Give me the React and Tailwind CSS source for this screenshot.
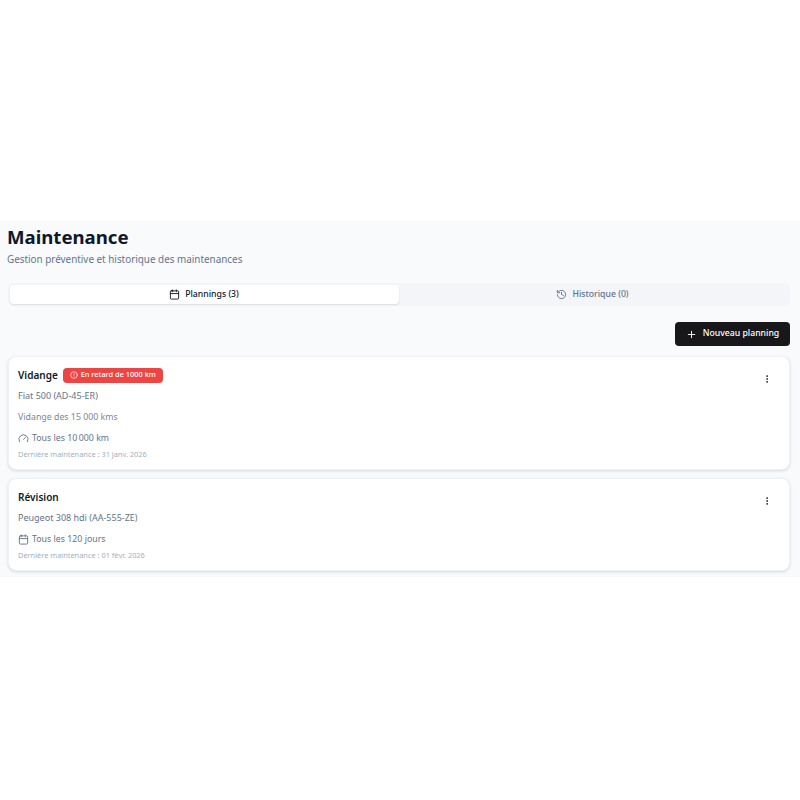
import { Calendar, CircleAlert, EllipsisVertical, Gauge, History, Plus } from "lucide-react"

function Card({ title, badge, vehicle, note, icon: Icon, every, last }) {
  return (
    <div className="flex items-start justify-between rounded-lg border border-[#eef1f5] bg-white pl-[9px] pr-[17px] pt-[10px] pb-[7px] shadow-[0_1px_3px_rgba(15,23,42,0.14)]">
      <div className="flex flex-col">
        <div className="flex h-[16px] items-center gap-[5px]">
          <h3 className="text-[10px] font-semibold text-[#0f172a]">{title}</h3>
          {badge && (
            <span className="flex h-[15px] w-[100px] items-center justify-center gap-[3px] rounded-[4px] bg-[#ef4444] text-[7.4px] font-medium text-white">
              <CircleAlert className="h-[8px] w-[8px]" />
              {badge}
            </span>
          )}
        </div>
        <p className="mt-[5px] text-[9px] leading-[16px] text-[#64748b]">{vehicle}</p>
        {note && <p className="mt-[5px] text-[8.8px] leading-[16px] text-[#7b8798]">{note}</p>}
        <div className="mt-[5px] flex h-[16px] items-center gap-[3px] text-[8.8px] leading-[16px] text-[#64748b]">
          <Icon className="h-[11px] w-[11px]" />
          {every}
        </div>
        <p className="text-[7.4px] leading-[16px] text-[#a3afbf]">{last}</p>
      </div>
      <EllipsisVertical className="mt-[7px] h-[10px] w-[10px] text-[#0f172a]" />
    </div>
  )
}

export default function App() {
  return (
    <div className="pt-[221px] font-['Noto_Sans',sans-serif]">
      <div className="flex h-[356px] flex-col bg-[#f8fafc] pl-[8px] pr-[10px] pt-[4px]">
        <h1 className="-ml-[1px] text-[18.6px] leading-[24px] font-bold text-[#0f172a]">Maintenance</h1>
        <p className="-ml-[1px] mt-[2px] text-[9.9px] leading-[16px] text-[#64748b]">Gestion préventive et historique des maintenances</p>

        <div className="mt-[16px] flex h-[23px] items-center rounded-md bg-[#f3f5f8] p-[2px]">
          <button className="flex h-[19px] w-[389px] items-center justify-center gap-[5px] rounded-[4px] bg-white pr-[1px] text-[8.7px] font-medium text-[#0f172a] shadow-[0_1px_2px_rgba(15,23,42,0.1)]">
            <Calendar className="h-[11px] w-[11px]" />
            Plannings (3)
          </button>
          <button className="flex h-[19px] flex-1 items-center justify-center gap-[5px] pr-[2px] text-[8.7px] font-medium text-[#64748b]">
            <History className="h-[11px] w-[11px]" />
            Historique (0)
          </button>
        </div>

        <div className="mt-[16px] flex justify-end">
          <button className="flex h-[24px] w-[115px] items-center justify-center gap-[6px] rounded-[4px] bg-[#18181b] text-[8.7px] font-medium text-white">
            <Plus className="h-[11px] w-[11px]" />
            Nouveau planning
          </button>
        </div>

        <div className="mt-[10px] flex flex-col gap-[8px]">
          <Card
            title="Vidange"
            badge="En retard de 1000 km"
            vehicle="Fiat 500 (AD-45-ER)"
            note="Vidange des 15 000 kms"
            icon={Gauge}
            every={"Tous les 10\u202f000 km"}
            last="Dernière maintenance : 31 janv. 2026"
          />
          <Card
            title="Révision"
            vehicle="Peugeot 308 hdi (AA-555-ZE)"
            icon={Calendar}
            every="Tous les 120 jours"
            last="Dernière maintenance : 01 févr. 2026"
          />
        </div>
      </div>
    </div>
  )
}
